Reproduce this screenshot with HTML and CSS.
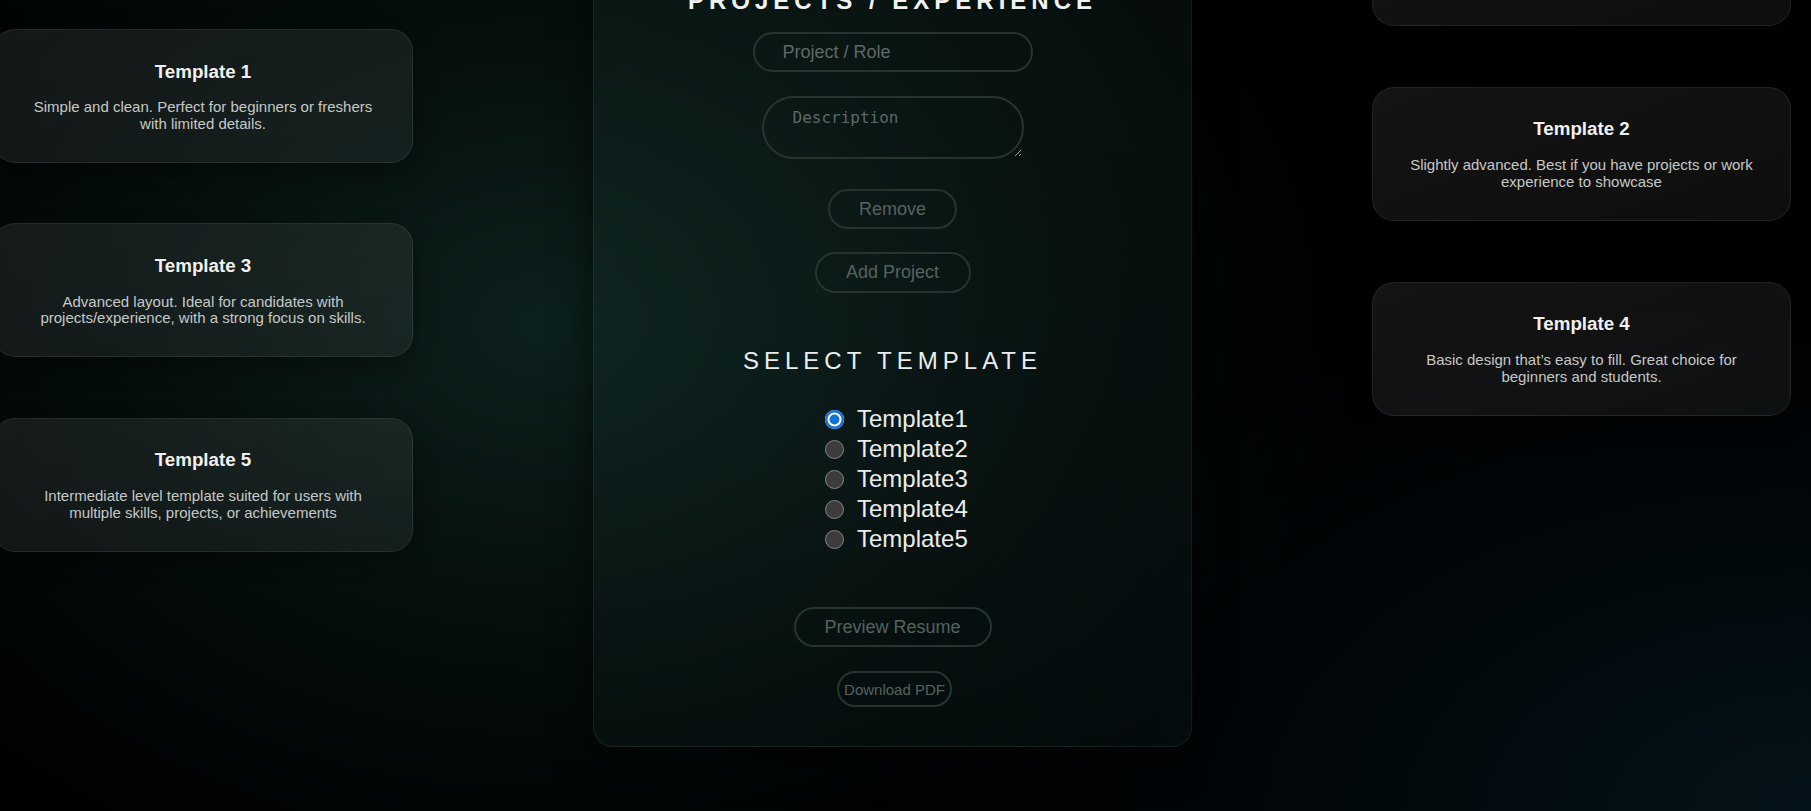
FILE: index.html
```html
<!DOCTYPE html>
<html lang="en">
<head>
<meta charset="utf-8">
<title>Resume Builder</title>
<link rel="stylesheet" href="styles.css">
</head>
<body>
<div class="page">
  <aside class="side side-left">
    <div class="card">
      <h3 class="card-title">Template 1</h3>
      <p class="card-desc">Simple and clean. Perfect for beginners or freshers with limited details.</p>
    </div>
    <div class="card">
      <h3 class="card-title">Template 3</h3>
      <p class="card-desc">Advanced layout. Ideal for candidates with projects/experience, with a strong focus on skills.</p>
    </div>
    <div class="card">
      <h3 class="card-title">Template 5</h3>
      <p class="card-desc">Intermediate level template suited for users with multiple skills, projects, or achievements</p>
    </div>
  </aside>

  <main class="panel">
    <h2 class="section-title">PROJECTS / EXPERIENCE</h2>
    <input class="field" type="text" placeholder="Project / Role">
    <textarea class="area" placeholder="Description"></textarea>
    <button class="btn btn-remove" type="button">Remove</button>
    <button class="btn btn-add" type="button">Add Project</button>

    <h2 class="select-title">SELECT TEMPLATE</h2>
    <div class="radio-group">
      <label class="radio-row"><input type="radio" name="tpl" checked><span>Template1</span></label>
      <label class="radio-row"><input type="radio" name="tpl"><span>Template2</span></label>
      <label class="radio-row"><input type="radio" name="tpl"><span>Template3</span></label>
      <label class="radio-row"><input type="radio" name="tpl"><span>Template4</span></label>
      <label class="radio-row"><input type="radio" name="tpl"><span>Template5</span></label>
    </div>

    <button class="btn btn-preview" type="button">Preview Resume</button>
    <button class="btn btn-download" type="button">Download PDF</button>
  </main>

  <aside class="side side-right">
    <div class="card card-blank"></div>
    <div class="card">
      <h3 class="card-title">Template 2</h3>
      <p class="card-desc">Slightly advanced. Best if you have projects or work experience to showcase</p>
    </div>
    <div class="card">
      <h3 class="card-title">Template 4</h3>
      <p class="card-desc">Basic design that’s easy to fill. Great choice for beginners and students.</p>
    </div>
  </aside>
</div>
</body>
</html>
```

FILE: styles.css
```css
* { box-sizing: border-box; }

html, body {
  margin: 0;
  height: 811px;
  overflow: hidden;
}

body {
  font-family: "Liberation Sans", Arial, sans-serif;
  color: #e8e8e8;
  background:
    radial-gradient(ellipse 950px 720px at 30% 40%, rgba(14, 38, 34, 0.85) 0%, rgba(8, 24, 22, 0.55) 45%, rgba(0, 0, 0, 0) 85%),
    radial-gradient(ellipse 1100px 650px at 100% 100%, rgba(5, 24, 32, 0.8) 0%, rgba(3, 14, 20, 0.5) 45%, rgba(0, 0, 0, 0) 85%),
    #000;
}

.page {
  display: flex;
  align-items: flex-start;
  margin-top: -140px;
}

.side {
  display: flex;
  flex-direction: column;
}

.side-left {
  width: 420px;
  margin-left: -7px;
  padding-top: 169px;
  gap: 60.5px;
}

.side-right {
  width: 419px;
  margin-left: 180px;
  padding-top: 32px;
  gap: 61px;
}

.card {
  background: linear-gradient(160deg, rgba(255, 255, 255, 0.08), rgba(255, 255, 255, 0.055));
  border: 1px solid rgba(255, 255, 255, 0.08);
  border-radius: 22px;
  padding: 30.5px 30px 29.6px;
  text-align: center;
  box-shadow: 0 8px 24px rgba(0, 0, 0, 0.35);
}

.card-blank { height: 133.8px; }

.card-title {
  margin: 0 0 16.7px;
  font-size: 18.75px;
  line-height: 22px;
  font-weight: bold;
  color: #f0f0f0;
}

.card-desc {
  margin: 0;
  font-size: 15px;
  line-height: 16.6px;
  color: #c6c8c7;
}

.panel {
  width: 599px;
  margin-left: 180px;
  padding: 126px 0 39px;
  display: flex;
  flex-direction: column;
  align-items: center;
  background: linear-gradient(170deg, rgba(40, 80, 70, 0.17), rgba(30, 60, 62, 0.13));
  border: 1px solid rgba(255, 255, 255, 0.07);
  border-radius: 20px;
  box-shadow: 0 12px 40px rgba(0, 0, 0, 0.55);
}

.section-title {
  margin: 0 0 17px;
  font-size: 24px;
  line-height: 28px;
  font-weight: bold;
  letter-spacing: 5px;
  color: #f2f2f2;
}

.field,
.area,
.btn {
  background: transparent;
  border: 2px solid #26342f;
  border-radius: 999px;
  color: #55625f;
  outline: none;
}

.field {
  width: 280px;
  height: 40px;
  padding: 0 28px;
  font-family: "Liberation Sans", Arial, sans-serif;
  font-size: 18px;
}

.field::placeholder { color: #5d6966; }

.area {
  margin-top: 24px;
  width: 262px;
  height: 63px;
  border-radius: 32px;
  padding: 10px 29px;
  font-family: "DejaVu Sans Mono", monospace;
  font-size: 16px;
  resize: both;
  display: block;
  color-scheme: dark;
}

.area::placeholder { color: #5d6966; }

.btn {
  height: 40px;
  padding: 0;
  font-family: "Liberation Sans", Arial, sans-serif;
  font-size: 18px;
  cursor: pointer;
}

.btn-remove { margin-top: 30px; width: 129px; }
.btn-add { margin-top: 23px; width: 156px; height: 41px; }

.select-title {
  margin: 54px 0 29px;
  font-size: 24px;
  line-height: 28px;
  font-weight: normal;
  letter-spacing: 5px;
  color: #ececec;
}

.radio-group {
  align-self: flex-start;
  margin-left: 231px;
  display: flex;
  flex-direction: column;
}

.radio-row {
  display: flex;
  align-items: center;
  height: 30px;
  gap: 13px;
  font-size: 24px;
  color: #ececec;
}

.radio-row input {
  appearance: none;
  -webkit-appearance: none;
  margin: 0;
  width: 19px;
  height: 19px;
  border-radius: 50%;
  background: #3c3c3c;
  border: 1px solid #858585;
  flex: none;
}

.radio-row input:checked {
  border: none;
  background: #0f72d5;
  box-shadow: inset 0 0 0 2.5px #0f72d5, inset 0 0 0 4.5px #ffffff;
}

.btn-preview { margin-top: 53px; width: 198px; }

.btn-download {
  margin-top: 24px;
  margin-left: 4px;
  width: 115px;
  height: 36px;
  font-size: 15px;
}
```
